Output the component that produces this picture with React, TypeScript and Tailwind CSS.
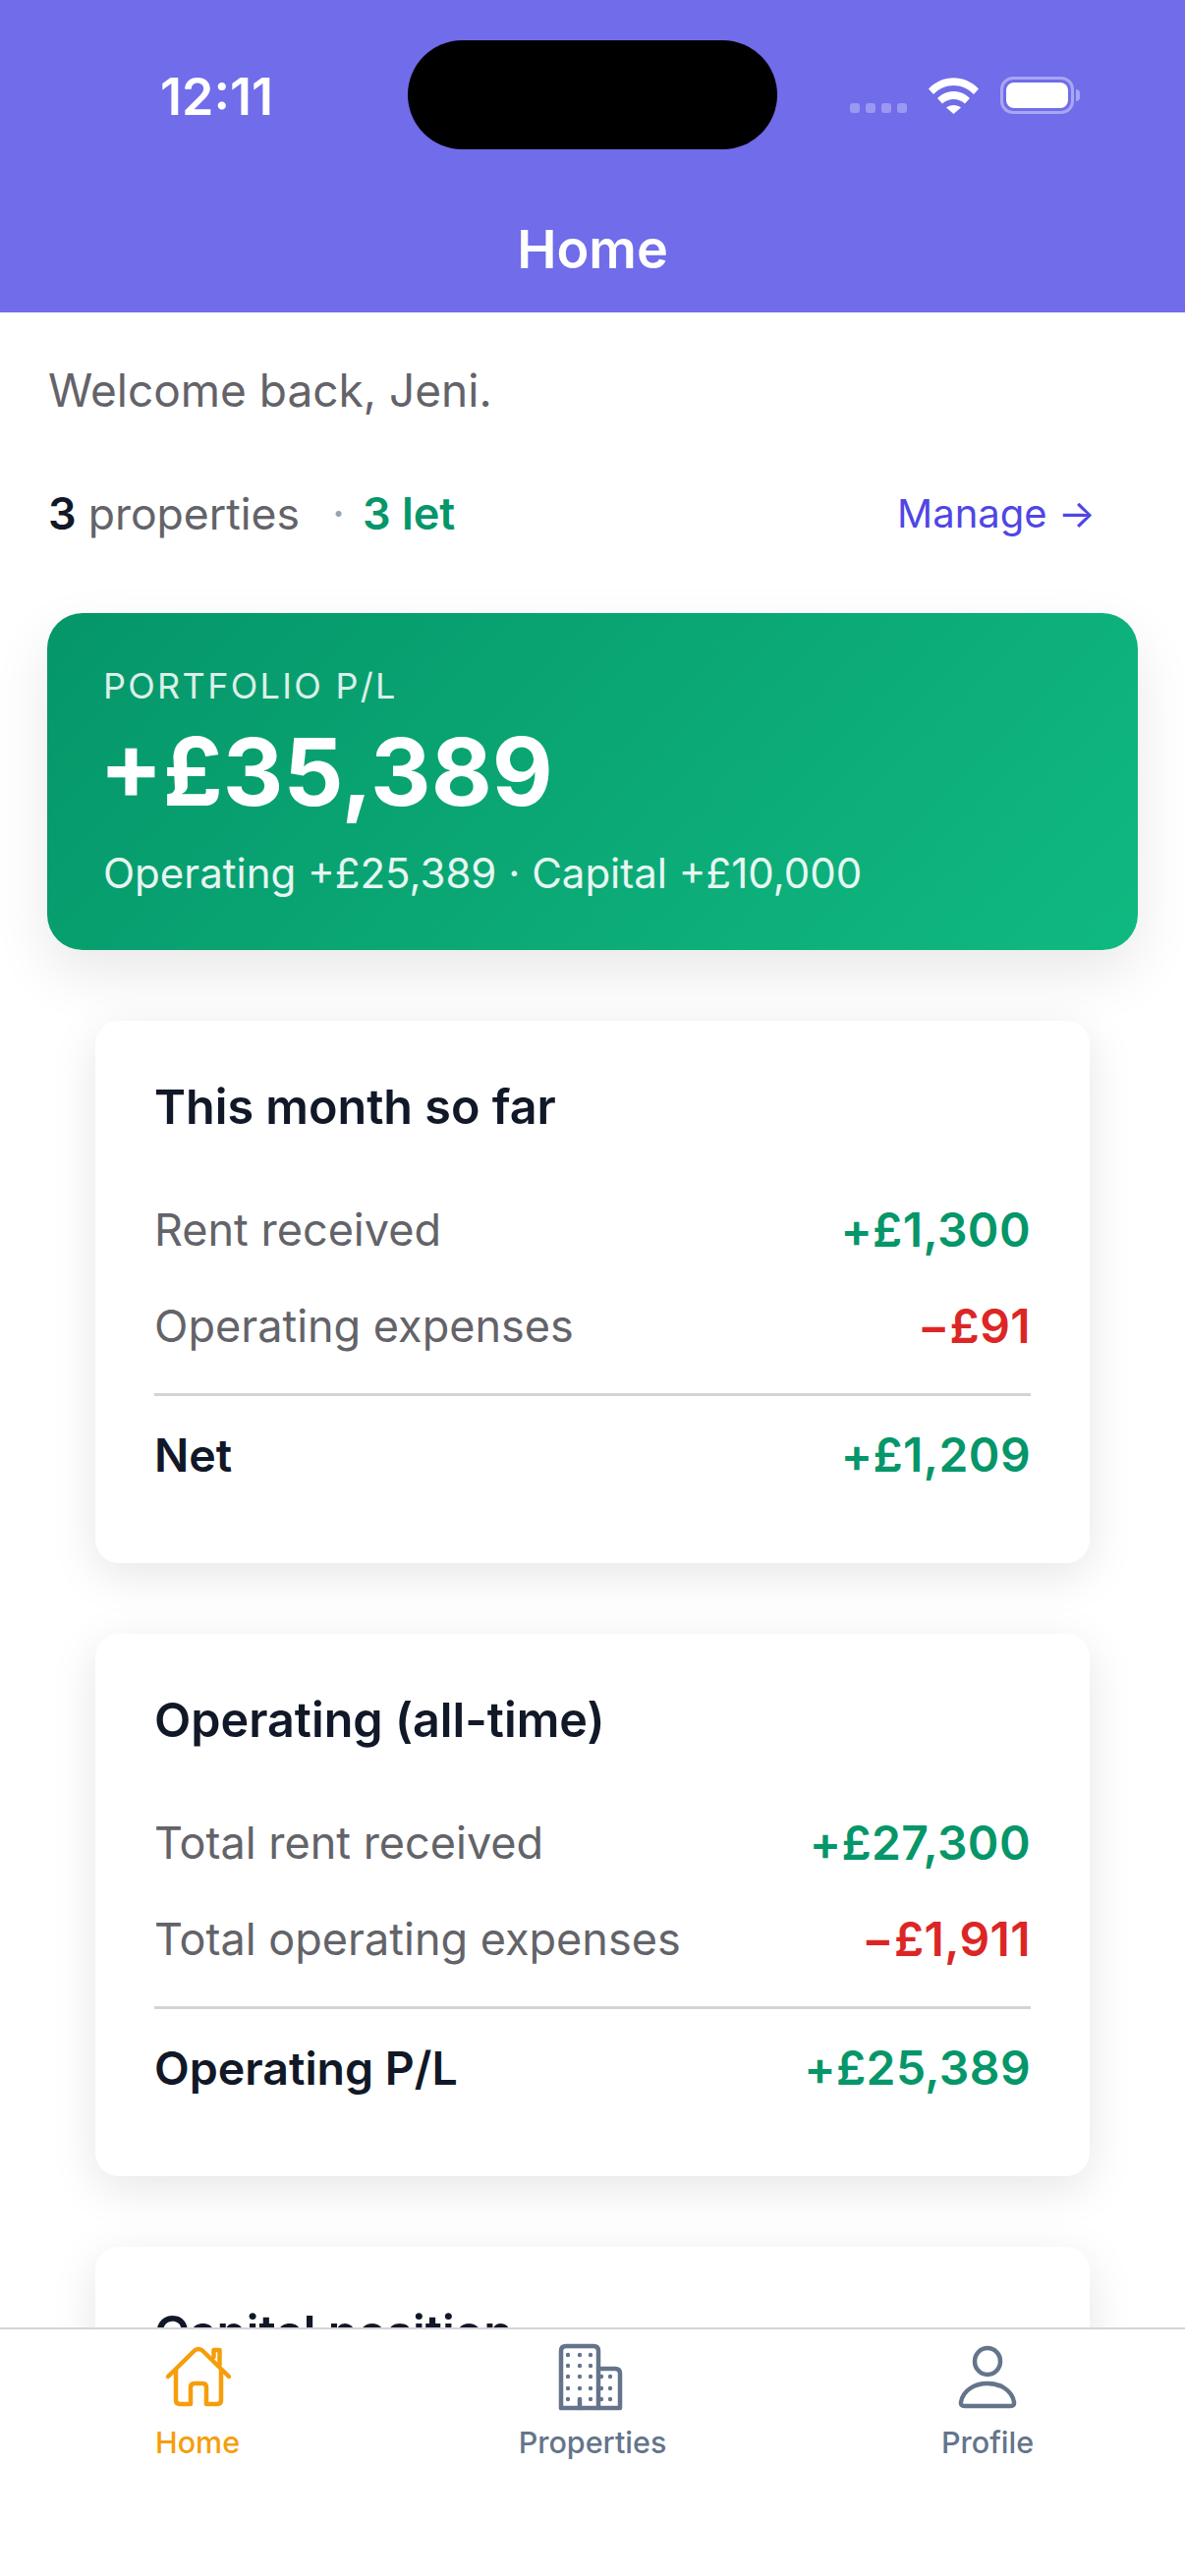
const cards = [
  {
    title: "This month so far",
    rows: [
      { label: "Rent received", value: "+£1,300", tone: "text-[#059669]" },
      { label: "Operating expenses", value: "−£91", tone: "text-[#dc2626]" },
    ],
    totalLabel: "Net",
    total: "+£1,209",
  },
  {
    title: "Operating (all-time)",
    rows: [
      { label: "Total rent received", value: "+£27,300", tone: "text-[#059669]" },
      { label: "Total operating expenses", value: "−£1,911", tone: "text-[#dc2626]" },
    ],
    totalLabel: "Operating P/L",
    total: "+£25,389",
  },
];

const HomeIcon = () => (
  <svg width="100" height="90" viewBox="0 0 100 90" fill="none" stroke="currentColor" strokeWidth="4.500" strokeLinecap="round" strokeLinejoin="round">
    <path d="M20 44 47 17.500q4-3 8 0L82 44" />
    <path d="M66.500 24v-7h6v15" />
    <path d="M28 37v31q0 4 4 4h11V55q0-4 4-4h8q4 0 4 4v17h11q4 0 4-4V37" />
  </svg>
);

const BUILDING_DOTS = [
  [25, 22], [37, 22], [48, 22],
  [25, 33], [37, 33], [48, 33],
  [25, 44], [37, 44], [48, 44], [59, 44], [68, 44],
  [25, 56], [37, 56], [48, 56], [59, 56], [68, 56],
  [25, 67], [48, 67], [59, 67], [68, 67],
];

const BuildingIcon = () => (
  <svg width="100" height="90" viewBox="0 0 100 90" fill="none" stroke="currentColor" strokeWidth="4.500" strokeLinecap="round" strokeLinejoin="round">
    <path d="M18 76V18q0-5 5-5h28q5 0 5 5v58" />
    <path d="M56 36h17q5 0 5 5v35H18" />
    <path d="M37 67v9" />
    {BUILDING_DOTS.map(([x, y]) => (
      <circle key={`${x}-${y}`} cx={x} cy={y} r="2.200" fill="currentColor" stroke="none" />
    ))}
  </svg>
);

const ProfileIcon = () => (
  <svg width="100" height="90" viewBox="0 0 100 90" fill="none" stroke="currentColor" strokeWidth="4.500" strokeLinejoin="round">
    <ellipse cx="50" cy="28.500" rx="13" ry="13.500" />
    <path d="M23 70C25 58 37 51 50 51S75 58 77 70q.5 4-3.500 4h-47q-4 0-3.500-4z" />
  </svg>
);

const tabs = [
  { label: "Home", Icon: HomeIcon, tone: "text-[#f59e0b]" },
  { label: "Properties", Icon: BuildingIcon, tone: "text-[#64748b]" },
  { label: "Profile", Icon: ProfileIcon, tone: "text-[#64748b]" },
];

const StatusIcons = () => (
  <div className="flex items-end self-start pl-[74px] pt-[37px]">
    <div className="flex gap-[6px] pb-[1px]">
      {[0, 1, 2, 3].map((i) => (
        <span key={i} className="h-[10px] w-[10px] rounded-[3px] bg-white/30" />
      ))}
    </div>
    <svg className="ml-[22px]" width="51" height="37" viewBox="0 0 51 37" fill="white">
      <path d="M0 11.500C14-3.500 37-3.500 51 11.500l-5 5.500C34.500 5 16.500 5 5 17z" />
      <path d="M9 21c9-9.500 24-9.500 33 0l-5 5.500c-6.500-6-16.500-6-23 0z" />
      <path d="M18 30.500c4-3.500 11-3.500 15 0l-7.500 6.500z" />
    </svg>
    <div className="ml-[22px] flex items-center">
      <div className="flex h-[38px] w-[75px] rounded-[13px] border-[3px] border-white/40 p-[3px]">
        <div className="flex-1 rounded-[8px] bg-white" />
      </div>
      <span className="ml-[2px] h-[12px] w-[4px] rounded-r-full bg-white/40" />
    </div>
  </div>
);

const Header = () => (
  <header className="h-[318px] shrink-0 bg-[#706cea] pt-[41px] text-white">
    <div className="grid h-[111px] grid-cols-[415px_376px_1fr]">
      <div className="pl-[163px] pt-[29px] text-[52px] font-semibold leading-[58px]">12:11</div>
      <div className="rounded-[56px] bg-black" />
      <StatusIcons />
    </div>
    <h1 className="mt-[75px] text-center text-[54px] font-semibold leading-[54px]">Home</h1>
  </header>
);

const Card = ({ card }: { card: (typeof cards)[number] }) => (
  <section className="mx-[97px] mt-[72px] rounded-[24px] bg-white px-[60px] pb-[76px] pt-[61px] shadow-[0_12px_48px_rgba(0,0,0,0.1)]">
    <h2 className="text-[48.5px] font-semibold leading-[54px] text-[#111827]">{card.title}</h2>
    <div className="mt-[64px] flex flex-col gap-[30px]">
      {card.rows.map((row) => (
        <div key={row.label} className="flex items-center justify-between leading-[68px]">
          <span className="text-[45px] text-[#636369]">{row.label}</span>
          <span className={`text-[48px] font-semibold tracking-[0.4px] ${row.tone}`}>{row.value}</span>
        </div>
      ))}
    </div>
    <div className="mt-[34px] flex items-center justify-between border-t-[3px] border-[#d4d4d8] pt-[26px] font-semibold leading-[68px]">
      <span className="text-[46.5px] text-[#111827]">{card.totalLabel}</span>
      <span className="text-[48px] tracking-[0.4px] text-[#059669]">{card.total}</span>
    </div>
  </section>
);

export default function App() {
  return (
    <div className="flex h-[2622px] w-[1206px] flex-col overflow-hidden bg-white font-['Inter',sans-serif]">
      <Header />
      <main className="min-h-0 flex-1 overflow-hidden">
        <p className="pl-[49px] pt-[50px] text-[46px] leading-[58px] text-[#636369]">Welcome back, Jeni.</p>
        <div className="mt-[67px] flex items-center justify-between pl-[49px] pr-[91px] text-[45px] leading-[60px]">
          <div className="flex items-center">
            <span className="font-semibold text-[#111827]">3</span>
            <span className="ml-[12px] text-[44.5px] text-[#636369]">properties</span>
            <span className="ml-[33px] text-[#9ca3af]">·</span>
            <span className="ml-[18px] font-semibold text-[#059669]">3 let</span>
          </div>
          <span className="text-[40px] text-[#4f46e5]">Manage →</span>
        </div>
        <section className="mx-[48px] mt-[71px] h-[343px] rounded-[36px] bg-[linear-gradient(135deg,#059669,#10b981)] px-[57px] pt-[52px] text-white shadow-[0_24px_60px_rgba(0,0,0,0.09)]">
          <p className="text-[36px] uppercase leading-[44px] tracking-[2.3px] text-white/85">Portfolio P/L</p>
          <p className="-ml-[4px] mt-[11px] text-[95.5px] font-bold leading-[108px]">+£35,389</p>
          <p className="mt-[24px] text-[42px] leading-[52px] text-white/90">Operating +£25,389 · Capital +£10,000</p>
        </section>
        {cards.map((card) => (
          <Card key={card.title} card={card} />
        ))}
        <section className="mx-[97px] mt-[72px] h-[300px] rounded-[24px] bg-white px-[60px] pt-[61px] shadow-[0_12px_48px_rgba(0,0,0,0.1)]">
          <h2 className="text-[48.5px] font-semibold leading-[54px] text-[#111827]">Capital position</h2>
        </section>
      </main>
      <nav className="grid h-[253px] shrink-0 grid-cols-3 border-t-[2px] border-[#d4d4d8] bg-white pt-[4px]">
        {tabs.map(({ label, Icon, tone }) => (
          <div key={label} className={`flex flex-col items-center ${tone}`}>
            <Icon />
            <span className="mt-[1px] text-[30.5px] font-medium leading-[40px]">{label}</span>
          </div>
        ))}
      </nav>
    </div>
  );
}
